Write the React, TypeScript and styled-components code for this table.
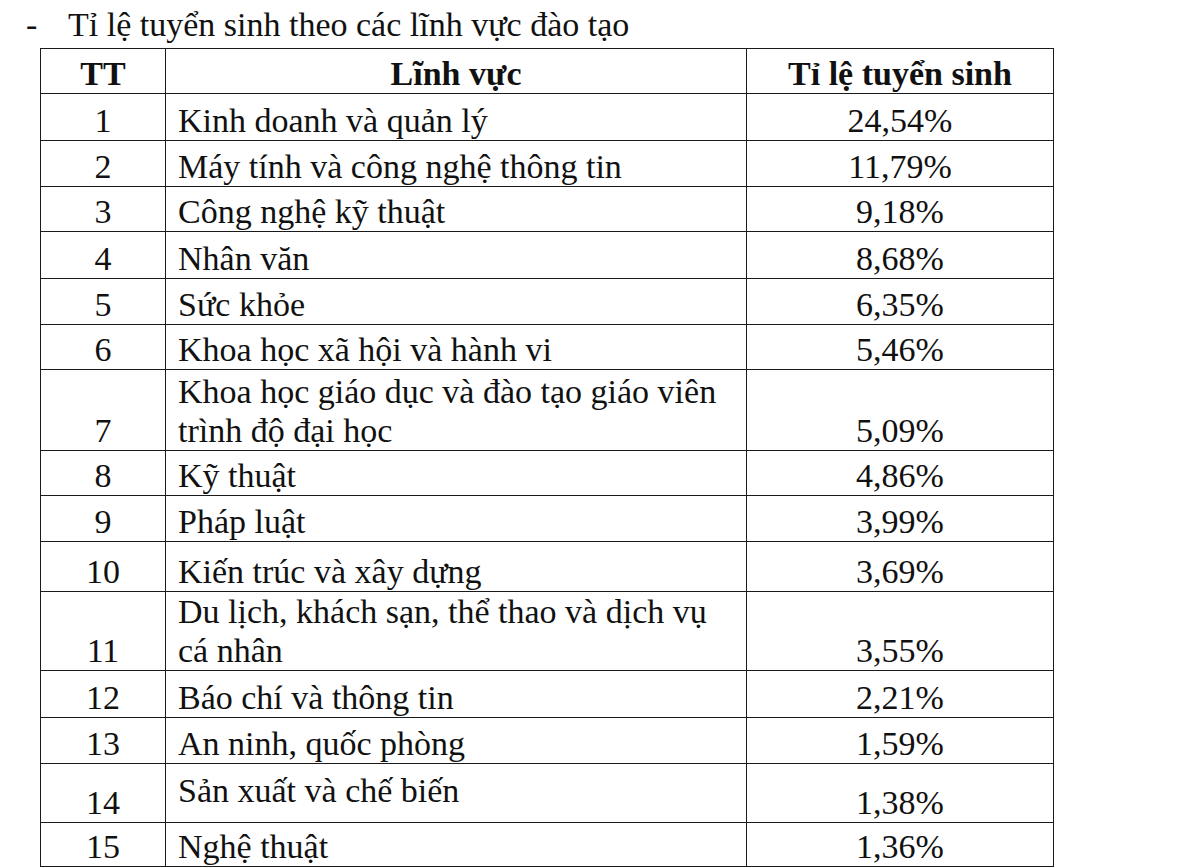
import React from "react";
import styled, { createGlobalStyle } from "styled-components";

const GlobalStyle = createGlobalStyle`
  html, body {
    margin: 0;
    padding: 0;
    background: #ffffff;
  }
  body {
    font-family: "Liberation Serif", "Times New Roman", serif;
    color: #111111;
  }
`;

const Page = styled.div`
  width: 1200px;
  height: 868px;
  overflow: hidden;
  background: #ffffff;
`;

const Heading = styled.div`
  display: flex;
  align-items: baseline;
  height: 48px;
  padding-top: 6px;
  box-sizing: border-box;
  font-size: 34px;
  line-height: 38.5px;
  white-space: nowrap;
`;

const Dash = styled.span`
  width: 68px;
  padding-left: 26px;
  box-sizing: border-box;
`;

const Table = styled.div`
  margin-left: 40px;
  width: 1014px;
  border-top: 1px solid #1a1a1a;
  border-left: 1px solid #1a1a1a;
  box-sizing: border-box;
`;

const Row = styled.div<{ $h: number }>`
  display: grid;
  grid-template-columns: 125px 581px 307px;
  height: ${(p) => p.$h}px;
  box-sizing: border-box;
  border-bottom: 1px solid #1a1a1a;
`;

const Cell = styled.div<{ $align: "center" | "left"; $lift?: number; $bold?: boolean }>`
  display: flex;
  align-items: flex-end;
  justify-content: ${(p) => (p.$align === "center" ? "center" : "flex-start")};
  padding-left: ${(p) => (p.$align === "left" ? 12 : 0)}px;
  padding-bottom: ${(p) => p.$lift ?? 0}px;
  border-right: 1px solid #1a1a1a;
  box-sizing: border-box;
  font-size: 34px;
  line-height: 38.5px;
  font-weight: ${(p) => (p.$bold ? 700 : 400)};
  white-space: nowrap;
`;

type Item = {
  no: string;
  field: React.ReactNode;
  rate: string;
  h: number;
  lift?: number;
};

const rows: Item[] = [
  { no: "1", field: "Kinh doanh và quản lý", rate: "24,54%", h: 47 },
  { no: "2", field: "Máy tính và công nghệ thông tin", rate: "11,79%", h: 46 },
  { no: "3", field: "Công nghệ kỹ thuật", rate: "9,18%", h: 45 },
  { no: "4", field: "Nhân văn", rate: "8,68%", h: 47 },
  { no: "5", field: "Sức khỏe", rate: "6,35%", h: 46 },
  { no: "6", field: "Khoa học xã hội và hành vi", rate: "5,46%", h: 45 },
  {
    no: "7",
    field: (
      <span>
        Khoa học giáo dục và đào tạo giáo viên
        <br />
        trình độ đại học
      </span>
    ),
    rate: "5,09%",
    h: 81,
  },
  { no: "8", field: "Kỹ thuật", rate: "4,86%", h: 45 },
  { no: "9", field: "Pháp luật", rate: "3,99%", h: 46 },
  { no: "10", field: "Kiến trúc và xây dựng", rate: "3,69%", h: 50 },
  {
    no: "11",
    field: (
      <span>
        Du lịch, khách sạn, thể thao và dịch vụ
        <br />
        cá nhân
      </span>
    ),
    rate: "3,55%",
    h: 79,
  },
  { no: "12", field: "Báo chí và thông tin", rate: "2,21%", h: 47 },
  { no: "13", field: "An ninh, quốc phòng", rate: "1,59%", h: 46 },
  { no: "14", field: "Sản xuất và chế biến", rate: "1,38%", h: 59, lift: 12 },
  { no: "15", field: "Nghệ thuật", rate: "1,36%", h: 44 },
];

export default function App() {
  return (
    <Page>
      <GlobalStyle />
      <Heading>
        <Dash>-</Dash>
        <span>Tỉ lệ tuyển sinh theo các lĩnh vực đào tạo</span>
      </Heading>
      <Table>
        <Row $h={45}>
          <Cell $align="center" $bold>
            TT
          </Cell>
          <Cell $align="center" $bold>
            Lĩnh vực
          </Cell>
          <Cell $align="center" $bold>
            Tỉ lệ tuyển sinh
          </Cell>
        </Row>
        {rows.map((r) => (
          <Row key={r.no} $h={r.h}>
            <Cell $align="center">{r.no}</Cell>
            <Cell $align="left" $lift={r.lift}>
              {r.field}
            </Cell>
            <Cell $align="center">{r.rate}</Cell>
          </Row>
        ))}
      </Table>
    </Page>
  );
}
